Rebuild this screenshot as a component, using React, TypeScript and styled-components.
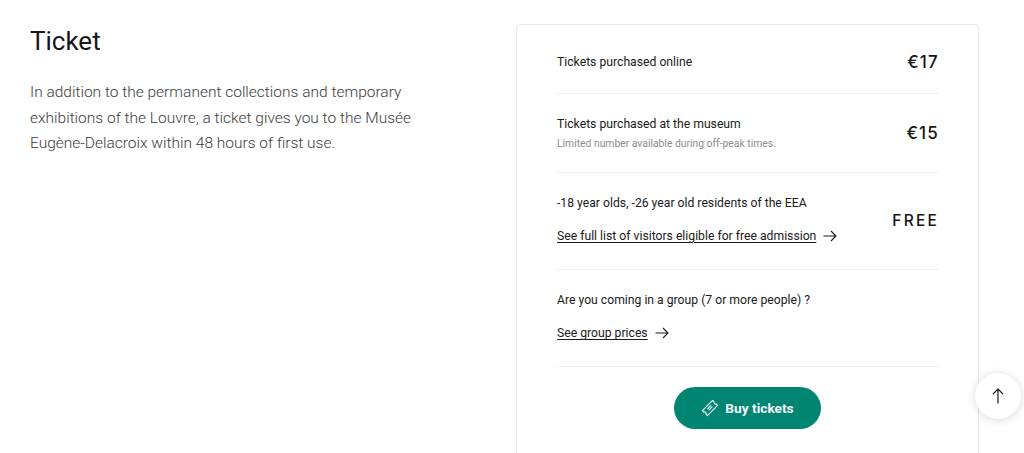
import React from "react";
import styled, { createGlobalStyle } from "styled-components";

const GlobalStyle = createGlobalStyle`
  html, body {
    margin: 0;
    padding: 0;
    height: 100%;
    overflow: hidden;
    background: #fff;
  }
  body {
    font-family: Roboto, "Liberation Sans", sans-serif;
    color: #1a1a1a;
  }
`;

const Page = styled.div`
  display: grid;
  grid-template-columns: 486px 463px;
  column-gap: 0;
  padding: 24px 0 0 30px;
  height: 429px;
  overflow: hidden;
`;

const Intro = styled.section`
  width: 390px;
`;

const Title = styled.h2`
  margin: 0;
  font-size: 26px;
  line-height: 34px;
  font-weight: 400;
  color: #161616;
`;

const Lead = styled.p`
  margin: 22px 0 0;
  font-size: 15.5px;
  line-height: 25.5px;
  font-weight: 300;
  color: #3c3c3c;
`;

const Card = styled.section`
  box-sizing: border-box;
  height: 520px;
  padding: 6px 40px 0;
  border: 1px solid #e8e8e8;
  border-radius: 4px;
`;

const Row = styled.div`
  display: flex;
  align-items: center;
  justify-content: space-between;
  padding: 20px 0;
  border-bottom: 1px solid #f0f0f0;
`;

const RowText = styled.div`
  display: flex;
  flex-direction: column;
  align-items: flex-start;
`;

const Label = styled.div`
  font-size: 12.2px;
  line-height: 20px;
  font-weight: 400;
  color: #1a1a1a;
`;

const Note = styled.div`
  margin-top: 2px;
  font-size: 10.35px;
  line-height: 16px;
  font-weight: 400;
  color: #8c8c8c;
`;

const MoreLink = styled.a`
  display: inline-flex;
  align-items: center;
  gap: 7px;
  margin: 14px 0 4px;
  font-size: 12.2px;
  line-height: 18px;
  color: #1a1a1a;

  span {
    text-decoration: underline;
    text-underline-offset: 2px;
  }
`;

const Price = styled.div<{ $spaced?: boolean }>`
  font-family: Inter, "Noto Sans", sans-serif;
  font-size: ${({ $spaced }) => ($spaced ? "15.5px" : "17px")};
  line-height: 22px;
  font-weight: 500;
  letter-spacing: ${({ $spaced }) => ($spaced ? "2.2px" : "1.2px")};
  margin-right: ${({ $spaced }) => ($spaced ? "-1px" : "-1px")};
  color: #161616;
`;

const BuyRow = styled.div`
  display: flex;
  justify-content: center;
  padding-top: 20px;
`;

const BuyButton = styled.button`
  display: flex;
  align-items: center;
  justify-content: center;
  gap: 6px;
  width: 147px;
  height: 42px;
  padding: 0;
  border: 0;
  border-radius: 21px;
  background: #008573;
  color: #f4fbfa;
  font-family: Roboto, "Liberation Sans", sans-serif;
  font-size: 13.7px;
  font-weight: 700;
`;

const TopButton = styled.button`
  position: fixed;
  left: 975px;
  top: 373px;
  display: flex;
  align-items: center;
  justify-content: center;
  width: 46px;
  height: 46px;
  padding: 0;
  border: 0;
  border-radius: 50%;
  background: #fff;
  box-shadow: 0 1px 8px rgba(0, 0, 0, 0.16);
  color: #1a1a1a;
`;

const ArrowRight = () => (
  <svg width="14" height="12" viewBox="0 0 14 12" fill="none" stroke="currentColor" strokeWidth="1.1">
    <path d="M0.5 6H13M8 1l5 5-5 5" />
  </svg>
);

const ArrowUp = () => (
  <svg width="12" height="16" viewBox="0 0 12 16" fill="none" stroke="currentColor" strokeWidth="1.2">
    <path d="M6 15.5V1M1 6l5-5 5 5" />
  </svg>
);

const TicketIcon = () => (
  <svg width="18" height="18" viewBox="0 0 18 18" fill="none" stroke="currentColor" strokeWidth="1.1">
    <path d="M11.6 1.4l1.5 1.5a1.5 1.5 0 0 0 2 2l1.5 1.5L6.4 16.6l-1.5-1.5a1.5 1.5 0 0 0-2-2L1.4 11.6z" strokeLinejoin="round" />
    <path d="M6.4 10.2l3.8-3.8M7.6 11.4l3.8-3.8" />
  </svg>
);

export default function App() {
  return (
    <>
      <GlobalStyle />
      <Page>
        <Intro>
          <Title>Ticket</Title>
          <Lead>
            In addition to the permanent collections and temporary exhibitions of the Louvre, a
            ticket gives you to the Musée Eugène-Delacroix within 48 hours of first use.
          </Lead>
        </Intro>
        <Card>
          <Row>
            <RowText>
              <Label>Tickets purchased online</Label>
            </RowText>
            <Price>€17</Price>
          </Row>
          <Row>
            <RowText>
              <Label>Tickets purchased at the museum</Label>
              <Note>Limited number available during off-peak times.</Note>
            </RowText>
            <Price>€15</Price>
          </Row>
          <Row>
            <RowText>
              <Label>-18 year olds, -26 year old residents of the EEA</Label>
              <MoreLink>
                <span>See full list of visitors eligible for free admission</span>
                <ArrowRight />
              </MoreLink>
            </RowText>
            <Price $spaced>FREE</Price>
          </Row>
          <Row>
            <RowText>
              <Label>Are you coming in a group (7 or more people) ?</Label>
              <MoreLink>
                <span>See group prices</span>
                <ArrowRight />
              </MoreLink>
            </RowText>
          </Row>
          <BuyRow>
            <BuyButton>
              <TicketIcon />
              Buy tickets
            </BuyButton>
          </BuyRow>
        </Card>
      </Page>
      <TopButton aria-label="Back to top">
        <ArrowUp />
      </TopButton>
    </>
  );
}
